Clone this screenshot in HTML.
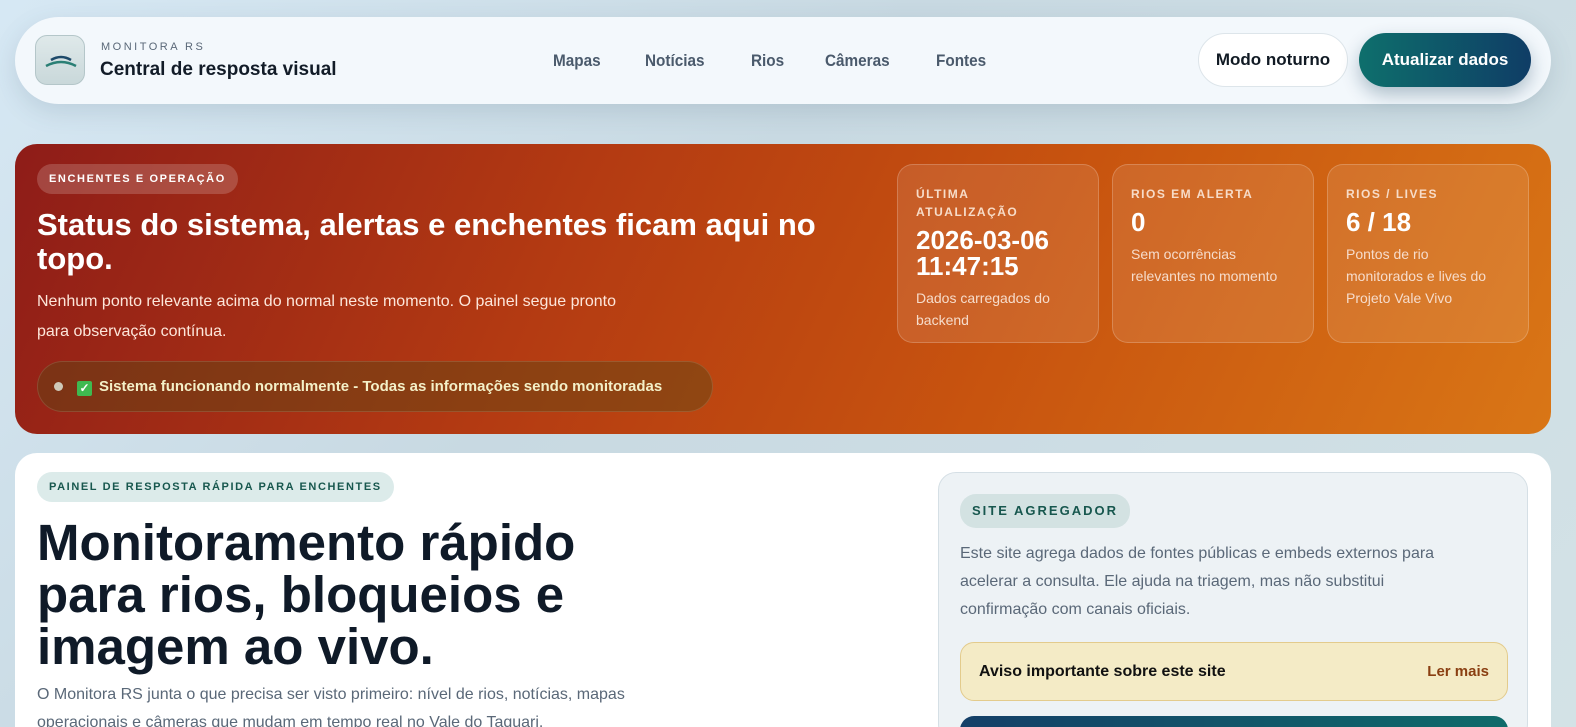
<!DOCTYPE html>
<html style="overflow:hidden;width:1576px;height:727px"><head><meta charset="utf-8"><style>
*{box-sizing:border-box;margin:0;padding:0}
body{width:1576px;height:727px;overflow:hidden;font-family:"Liberation Sans",sans-serif;background:linear-gradient(135deg,#d6e8f4 0%,#c8d9e2 40%,#d3e2e6 100%);position:relative}
.abs{position:absolute}
.nw{white-space:nowrap}
.hdr{left:15px;top:17px;width:1536px;height:87px;border-radius:44px;background:#f3f8fc;box-shadow:0 8px 24px rgba(60,90,110,.15)}
.logo{left:20px;top:18px;width:50px;height:50px;border-radius:12px;background:linear-gradient(#dfe9ea,#c9d8da);border:1px solid #b4c6c9}
.nav{top:34px;font-size:17px;font-weight:bold;color:#4a5a6c;transform:scaleX(.9);transform-origin:left}
.btn1{left:1183px;top:16px;width:150px;height:54px;border-radius:27px;background:#fff;border:1px solid #dde5ea;font-size:17px;font-weight:bold;color:#111a24;text-align:center;line-height:52px}
.btn2{left:1344px;top:16px;width:172px;height:54px;border-radius:27px;background:linear-gradient(90deg,#0e6f6c,#0f3d66);font-size:17px;font-weight:bold;color:#fff;text-align:center;line-height:54px;box-shadow:0 8px 18px rgba(15,60,90,.3)}
.alert{left:15px;top:144px;width:1536px;height:290px;border-radius:22px;background:linear-gradient(115deg,#8e1c18 0%,#b33a12 35%,#c8540f 65%,#d97616 100%)}
.pill{border-radius:16px;font-size:11px;font-weight:bold;letter-spacing:1.6px;padding:0 12px;height:30px;line-height:30px}
.card{top:20px;width:202px;height:179px;border-radius:16px;background:rgba(255,255,255,.1);border:1px solid rgba(255,255,255,.2);padding:20px 18px;color:#fff}
.card .l{font-size:12px;font-weight:bold;letter-spacing:1.5px;color:#f7dcc8;line-height:18px}
.card .v{font-size:26px;font-weight:bold;line-height:26px;margin-top:6px}
.card .d{font-size:14px;color:#f6dccb;line-height:22px;margin-top:8px;white-space:nowrap}
.main{left:15px;top:453px;width:1536px;height:274px;border-radius:22px 22px 0 0;background:#fff;overflow:hidden}
.side{left:923px;top:19px;width:590px;height:270px;border-radius:18px;background:#edf2f5;border:1px solid #d5dfe5}
</style></head><body>
<div class="abs hdr">
  <div class="abs logo"><svg width="50" height="50" viewBox="0 0 50 50"><path d="M15 24 Q25 18 35 24" stroke="#1d4a6a" stroke-width="2.5" fill="none"/><path d="M10 30 Q25 22 40 30" stroke="#2a7f75" stroke-width="2.5" fill="none"/></svg></div>
  <div class="abs nw" style="left:86px;top:24px;font-size:11px;letter-spacing:2.5px;color:#5a6878">MONITORA RS</div>
  <div class="abs nw" style="left:85px;top:42px;font-size:19px;font-weight:bold;color:#121c28">Central de resposta visual</div>
  <div class="abs nav nw" style="left:538px">Mapas</div>
  <div class="abs nav nw" style="left:630px">Notícias</div>
  <div class="abs nav nw" style="left:736px">Rios</div>
  <div class="abs nav nw" style="left:810px">Câmeras</div>
  <div class="abs nav nw" style="left:921px">Fontes</div>
  <div class="abs btn1 nw">Modo noturno</div>
  <div class="abs btn2 nw">Atualizar dados</div>
</div>
<div class="abs alert">
  <div class="abs pill nw" style="left:22px;top:20px;background:rgba(255,255,255,.18);color:#fff">ENCHENTES E OPERAÇÃO</div>
  <div class="abs" style="left:22px;top:64px;width:850px;font-size:31px;font-weight:bold;color:#fff;line-height:34px">Status do sistema, alertas e enchentes ficam aqui no topo.</div>
  <div class="abs nw" style="left:22px;top:143px;font-size:16px;color:#fde6da;line-height:30px">Nenhum ponto relevante acima do normal neste momento. O painel segue pronto<br>para observação contínua.</div>
  <div class="abs nw" style="left:22px;top:217px;width:676px;height:51px;border-radius:26px;background:rgba(90,70,20,.45);border:1px solid rgba(255,255,255,.12);color:#f4f0c8;font-size:15px;font-weight:bold;line-height:50px;padding-left:16px"><span style="display:inline-block;width:9px;height:9px;border-radius:50%;background:#cfc9b8;margin-right:14px"></span><span style="display:inline-block;width:15px;height:15px;background:#3fb950;color:#fff;font-size:12px;line-height:15px;text-align:center;border-radius:2px;margin-right:7px;vertical-align:-1px">✓</span>Sistema funcionando normalmente - Todas as informações sendo monitoradas</div>
  <div class="abs card" style="left:882px"><div class="l">ÚLTIMA<br>ATUALIZAÇÃO</div><div class="v">2026-03-06<br>11:47:15</div><div class="d">Dados carregados do<br>backend</div></div>
  <div class="abs card" style="left:1097px"><div class="l">RIOS EM ALERTA</div><div class="v">0</div><div class="d">Sem ocorrências<br>relevantes no momento</div></div>
  <div class="abs card" style="left:1312px"><div class="l">RIOS / LIVES</div><div class="v">6 / 18</div><div class="d">Pontos de rio<br>monitorados e lives do<br>Projeto Vale Vivo</div></div>
</div>
<div class="abs main">
  <div class="abs pill nw" style="left:22px;top:19px;background:#dcebea;color:#17574e">PAINEL DE RESPOSTA RÁPIDA PARA ENCHENTES</div>
  <div class="abs" style="left:22px;top:64px;width:640px;font-size:51px;font-weight:bold;color:#0f1a28;line-height:52px">Monitoramento rápido para rios, bloqueios e imagem ao vivo.</div>
  <div class="abs" style="left:22px;top:228px;width:660px;font-size:16px;color:#5a6878;line-height:28px">O Monitora RS junta o que precisa ser visto primeiro: nível de rios, notícias, mapas operacionais e câmeras que mudam em tempo real no Vale do Taquari.</div>
  <div class="abs side">
    <div class="abs pill nw" style="left:21px;top:21px;height:34px;line-height:34px;font-size:13px;letter-spacing:2px;background:#d3e2e2;color:#17574e">SITE AGREGADOR</div>
    <div class="abs nw" style="left:21px;top:67px;font-size:16px;color:#5a6878;line-height:28px">Este site agrega dados de fontes públicas e embeds externos para<br>acelerar a consulta. Ele ajuda na triagem, mas não substitui<br>confirmação com canais oficiais.</div>
    <div class="abs" style="left:21px;top:169px;width:548px;height:59px;border-radius:14px;background:#f4ebc6;border:1px solid #e3cb8c">
      <div class="abs nw" style="left:18px;top:20px;font-size:16px;font-weight:bold;color:#111">Aviso importante sobre este site</div>
      <div class="abs nw" style="right:18px;top:20px;font-size:15px;font-weight:bold;color:#8a3f12">Ler mais</div>
    </div>
    <div class="abs" style="left:21px;top:243px;width:548px;height:30px;border-radius:14px 14px 0 0;background:linear-gradient(90deg,#143f68,#0f6b6a)"></div>
  </div>
</div>
</body></html>
